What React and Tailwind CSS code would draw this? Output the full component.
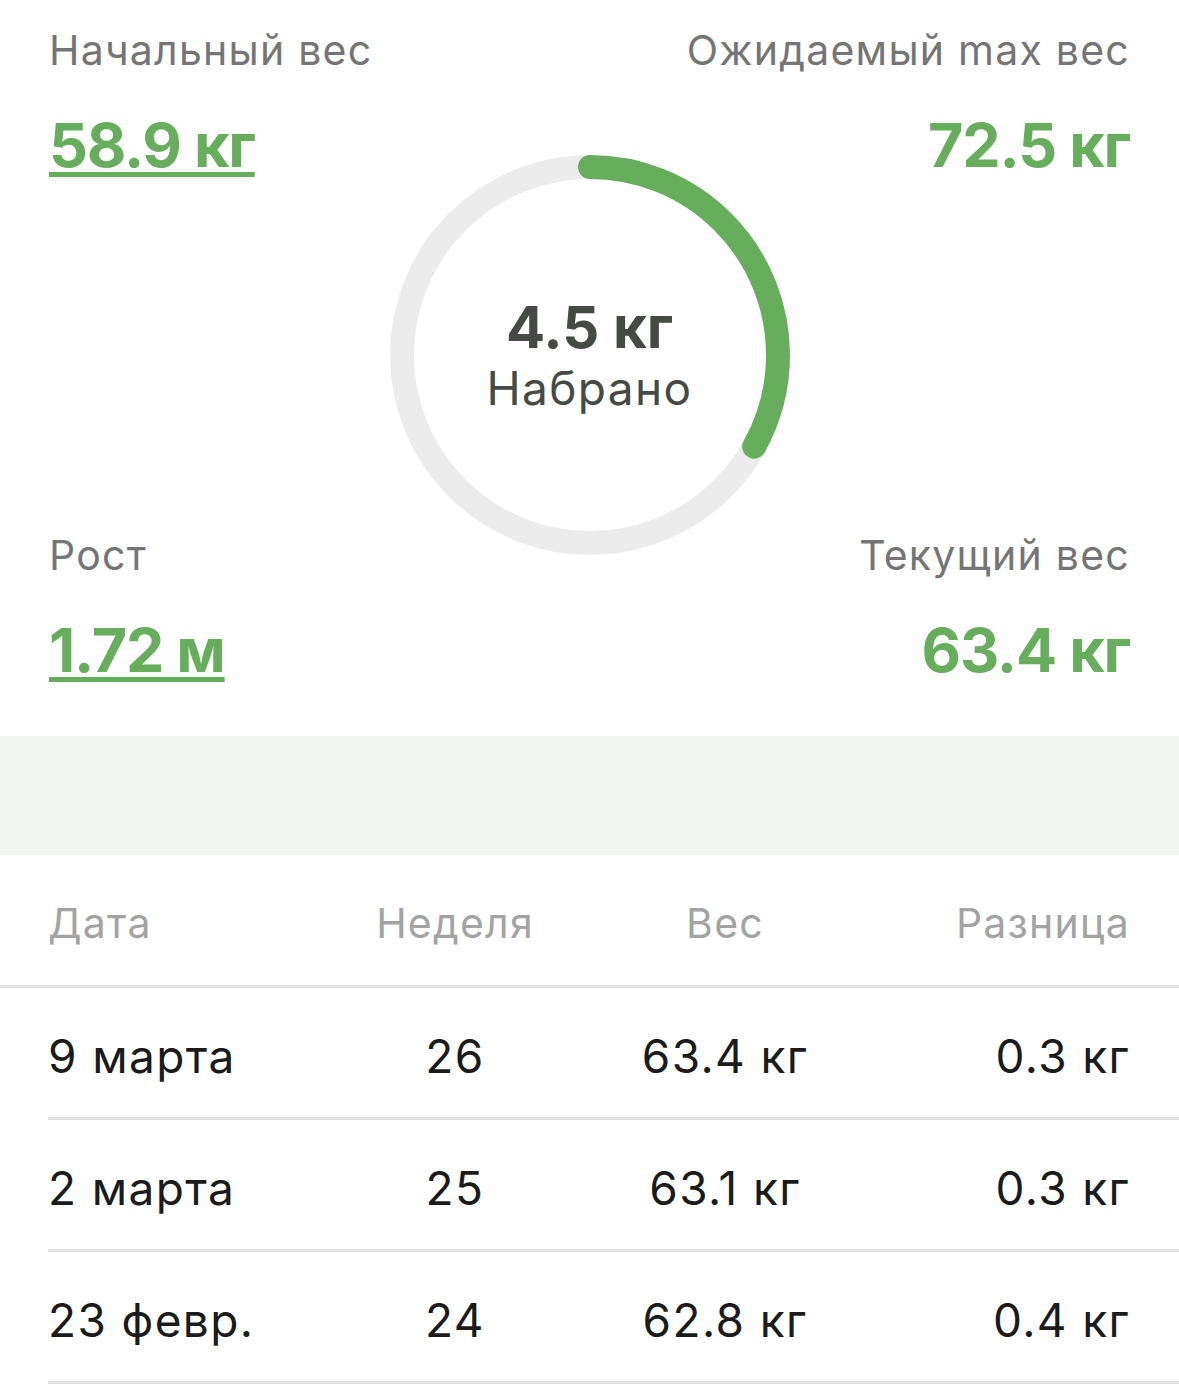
import React from 'react';

const rows = [
  { date: '9 марта', week: '26', weight: '63.4 кг', diff: '0.3 кг' },
  { date: '2 марта', week: '25', weight: '63.1 кг', diff: '0.3 кг' },
  { date: '23 февр.', week: '24', weight: '62.8 кг', diff: '0.4 кг' },
];

function Ring({ gained = 4.5, start = 58.9, max = 72.5 }) {
  const r = 188;
  const c = 2 * Math.PI * r;
  const part = (gained / (max - start)) * c;
  return (
    <div className="relative w-[400px] h-[400px]">
      <svg width="400" height="400" viewBox="0 0 400 400" className="absolute inset-0">
        <circle cx="200" cy="200" r={r} fill="none" stroke="#ececec" strokeWidth="24" />
        <circle
          cx="200" cy="200" r={r} fill="none" stroke="#67ae5c" strokeWidth="24"
          strokeLinecap="round" strokeDasharray={`${part} ${c}`}
          transform="rotate(-90 200 200)"
        />
      </svg>
      <div className="absolute inset-0 flex flex-col items-center justify-center">
        <div className="text-[58px] leading-[66px] font-bold text-[#454a44]">4.5 кг</div>
        <div className="text-[46px] leading-[56px] tracking-[0.03em] text-[#454a44]">Набрано</div>
      </div>
    </div>
  );
}

function Stat({ label, value, underline, right }) {
  return (
    <div className={`flex flex-col ${right ? 'items-end' : 'items-start'}`}>
      <div className="text-[41px] leading-[50px] tracking-[0.03em] whitespace-nowrap text-[#757575]">{label}</div>
      <div
        className={`mt-[34px] text-[61px] leading-[72px] font-bold text-[#67ae5c] tracking-[-0.02em] whitespace-nowrap ${
          underline ? 'underline decoration-[5px] underline-offset-[5px]' : ''
        }`}
      >
        {value}
      </div>
    </div>
  );
}

export default function App() {
  return (
    <div className="w-[1179px] h-[1390px] bg-white overflow-hidden" style={{ fontFamily: 'Inter, "Noto Sans", sans-serif' }}>
      {/* Summary */}
      <div className="h-[736px] grid grid-cols-[minmax(0,1fr)_400px_minmax(0,1fr)] px-[49px] pt-[25px]">
        <div className="flex flex-col justify-between pb-[50px]">
          <Stat label="Начальный вес" value="58.9 кг" underline />
          <Stat label="Рост" value="1.72 м" underline />
        </div>
        <div className="mt-[130px]">
          <Ring />
        </div>
        <div className="flex flex-col justify-between pb-[50px]">
          <Stat label="Ожидаемый max вес" value="72.5 кг" right />
          <Stat label="Текущий вес" value="63.4 кг" right />
        </div>
      </div>

      <div className="h-[119px] bg-[#f2f4f2]" />

      {/* Table */}
      <div className="border-b-[3px] border-[#e2e2e2]">
        <div className="h-[130px] pt-[8px] grid grid-cols-[270px_274px_266px_1fr] items-center pl-[48px] pr-[49px] text-[41px] tracking-[0.03em] text-[#a3a3a3]">
          <div>Дата</div>
          <div className="text-center">Неделя</div>
          <div className="text-center">Вес</div>
          <div className="text-right">Разница</div>
        </div>
      </div>
      <div className="pl-[48px]">
        {rows.map((r) => (
          <div key={r.date} className="h-[132px] pt-[8px] border-b-[3px] border-[#e2e2e2] grid grid-cols-[270px_274px_266px_1fr] items-center pr-[49px] text-[46px] tracking-[0.03em] text-[#1b1b1b]">
            <div>{r.date}</div>
            <div className="text-center">{r.week}</div>
            <div className="text-center">{r.weight}</div>
            <div className="text-right">{r.diff}</div>
          </div>
        ))}
      </div>
    </div>
  );
}
